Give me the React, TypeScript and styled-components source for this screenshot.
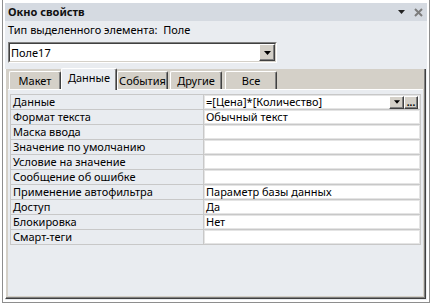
import React from "react";
import styled, { createGlobalStyle } from "styled-components";

const Global = createGlobalStyle`
  html, body { margin: 0; padding: 0; background: #ffffff; }
  body { font-family: "Noto Sans", "Open Sans", sans-serif; font-size: 11px; line-height: 14px; color: #000; }
  * { box-sizing: border-box; }
`;

const Screen = styled.div`
  width: 432px;
  height: 305px;
  overflow: hidden;
  background: #ffffff;
  padding-left: 2px;
`;

const Frame = styled.div`
  width: 428px;
  height: 303px;
  border-left: 1px solid #8e8e8e;
  border-right: 1px solid #8e8e8e;
  border-bottom: 1px solid #8e8e8e;
  padding: 3px 2px 2px 2px;
  background: #ffffff;
`;

const Panel = styled.div`
  width: 422px;
  height: 297px;
  background: #e9ecf0;
  display: flex;
  flex-direction: column;
`;

const TitleBar = styled.div`
  height: 18px;
  background: #d5dae1;
  display: flex;
  align-items: center;
  padding: 0 4px 0 3px;
  font-weight: bold;
  font-size: 11px;
  color: #111;
`;

const TitleText = styled.span`
  flex: 1;
`;

const TitleIcons = styled.div`
  display: flex;
  align-items: center;
  gap: 9px;
`;

const TypeRow = styled.div`
  height: 17px;
  display: flex;
  align-items: center;
  padding-left: 3px;
  white-space: pre;
`;

const Combo = styled.div`
  margin: 4px 0 0 3px;
  width: 269px;
  height: 21px;
  background: #fff;
  border-top: 1px solid #808080;
  border-left: 1px solid #808080;
  border-right: 1px solid #ffffff;
  border-bottom: 1px solid #ffffff;
  display: flex;
`;

const ComboInner = styled.div`
  flex: 1;
  display: flex;
  border-top: 1px solid #404040;
  border-left: 1px solid #404040;
  border-right: 1px solid #d4d0c8;
  border-bottom: 1px solid #d4d0c8;
`;

const ComboText = styled.div`
  flex: 1;
  display: flex;
  align-items: center;
  padding-left: 1px;
`;

const BevelButton = styled.div<{ $w: number }>`
  width: ${(p) => p.$w}px;
  background: #d4d0c8;
  border-top: 1px solid #ffffff;
  border-left: 1px solid #ffffff;
  border-right: 1px solid #404040;
  border-bottom: 1px solid #404040;
  box-shadow: inset -1px -1px 0 #808080;
  display: flex;
  align-items: center;
  justify-content: center;
  font-weight: bold;
  font-size: 10px;
  line-height: 1;
`;

const TabControl = styled.div`
  margin-top: 6px;
  height: 230px;
  width: 421px;
  background: #d4d0c8;
  display: flex;
  flex-direction: column;
  border-left: 1px solid #ffffff;
  border-right: 1px solid #404040;
  border-bottom: 1px solid #404040;
  box-shadow: inset -1px -1px 0 #808080;
`;

const TabStrip = styled.div`
  height: 20px;
  display: flex;
  align-items: flex-end;
  padding-left: 3px;
  position: relative;
  z-index: 1;
`;

const Tab = styled.div<{ $w: number; $ml: number; $active?: boolean }>`
  width: ${(p) => p.$w}px;
  margin-left: ${(p) => p.$ml}px;
  height: ${(p) => (p.$active ? 22 : 18)}px;
  margin-bottom: ${(p) => (p.$active ? -1 : 0)}px;
  background: ${(p) => (p.$active ? "#e9ecf0" : "#d4d0c8")};
  border-top: 1px solid #ffffff;
  border-left: 1px solid #ffffff;
  border-right: 1px solid #404040;
  box-shadow: inset -1px 0 0 #808080;
  border-radius: 2px 2px 0 0;
  display: flex;
  align-items: ${(p) => (p.$active ? "flex-start" : "center")};
  padding-top: ${(p) => (p.$active ? 2 : 1)}px;
  justify-content: center;
  white-space: nowrap;
  overflow: visible;
  font-size: 11px;
`;

const Page = styled.div`
  flex: 1;
  margin: 0 2px 2px 2px;
  background: #e9ecf0;
  border-top: 1px solid #ffffff;
  padding: 4px 0 0 2px;
`;

const Grid = styled.div`
  display: grid;
  grid-template-columns: 192px 216px;
  grid-auto-rows: 14px;
  gap: 1px;
  padding: 1px;
  width: 411px;
  background: #c8c8c8;
`;

const LabelCell = styled.div`
  background: #e9ecf0;
  padding-left: 2px;
  display: flex;
  align-items: center;
  white-space: nowrap;
  line-height: 14px;
`;

const ValueCell = styled.div`
  background: #ffffff;
  box-shadow: inset 0 0 0 1px #e4e4e4;
  padding-left: 2px;
  display: flex;
  align-items: center;
  white-space: nowrap;
  line-height: 14px;
`;

const ValueText = styled.span`
  flex: 1;
`;

const CellButtons = styled.div`
  display: flex;
  height: 13px;
  margin-right: 2px;
`;

const Arrow = ({ size = 7 }: { size?: number }) => (
  <svg width={size} height={4} viewBox="0 0 7 4">
    <path d="M0 0 H7 L3.5 4 Z" fill="#000" />
  </svg>
);

const rows: [string, string][] = [
  ["Данные", "=[Цена]*[Количество]"],
  ["Формат текста", "Обычный текст"],
  ["Маска ввода", ""],
  ["Значение по умолчанию", ""],
  ["Условие на значение", ""],
  ["Сообщение об ошибке", ""],
  ["Применение автофильтра", "Параметр базы данных"],
  ["Доступ", "Да"],
  ["Блокировка", "Нет"],
  ["Смарт-теги", ""],
];

const tabs = [
  { label: "Макет", w: 52, ml: 0 },
  { label: "Данные", w: 56, ml: 0, active: true },
  { label: "События", w: 51, ml: 0 },
  { label: "Другие", w: 52, ml: 2 },
  { label: "Все", w: 52, ml: 3 },
];

export default function App() {
  return (
    <>
      <Global />
      <Screen>
        <Frame>
          <Panel>
            <TitleBar>
              <TitleText>Окно свойств</TitleText>
              <TitleIcons>
                <svg width="7" height="4" viewBox="0 0 7 4">
                  <path d="M0 0 H7 L3.5 4 Z" fill="#222" />
                </svg>
                <svg width="9" height="9" viewBox="0 0 9 9">
                  <path d="M1 1 L8 8 M8 1 L1 8" stroke="#7c7c7c" strokeWidth="2" />
                </svg>
              </TitleIcons>
            </TitleBar>
            <TypeRow>Тип выделенного элемента:  Поле</TypeRow>
            <Combo>
              <ComboInner>
                <ComboText>Поле17</ComboText>
                <BevelButton $w={16}>
                  <Arrow />
                </BevelButton>
              </ComboInner>
            </Combo>
            <TabControl>
              <TabStrip>
                {tabs.map((t) => (
                  <Tab key={t.label} $w={t.w} $ml={t.ml} $active={t.active}>
                    {t.label}
                  </Tab>
                ))}
              </TabStrip>
              <Page>
                <Grid>
                  {rows.map(([l, v], i) => (
                    <React.Fragment key={l}>
                      <LabelCell>{l}</LabelCell>
                      <ValueCell>
                        <ValueText>{v}</ValueText>
                        {i === 0 && (
                          <CellButtons>
                            <BevelButton $w={15}>
                              <Arrow size={6} />
                            </BevelButton>
                            <BevelButton $w={14}>...</BevelButton>
                          </CellButtons>
                        )}
                      </ValueCell>
                    </React.Fragment>
                  ))}
                </Grid>
              </Page>
            </TabControl>
          </Panel>
        </Frame>
      </Screen>
    </>
  );
}
